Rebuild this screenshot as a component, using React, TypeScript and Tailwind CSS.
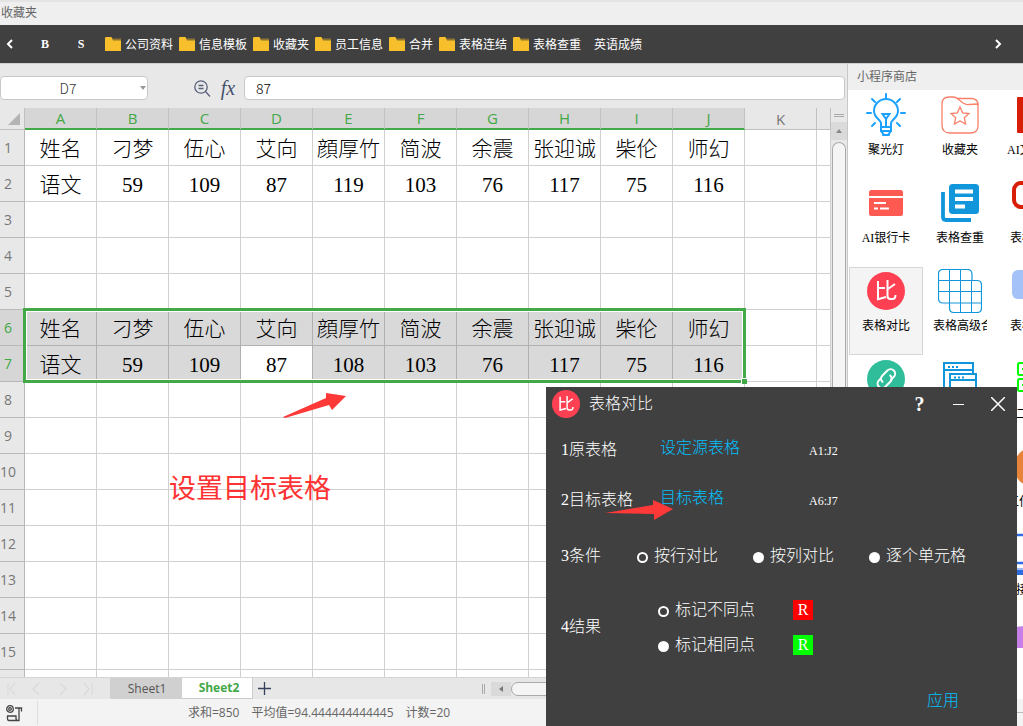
import React from 'react';

const columns = ['A', 'B', 'C', 'D', 'E', 'F', 'G', 'H', 'I', 'J', 'K', ''];
const names = ['姓名', '刁梦', '伍心', '艾向', '顔厚竹', '简波', '余震', '张迎诚', '柴伦', '师幻'];

const sheetData: Record<number, string[]> = {
  1: names,
  2: ['语文', '59', '109', '87', '119', '103', '76', '117', '75', '116'],
  6: names,
  7: ['语文', '59', '109', '87', '108', '103', '76', '117', '75', '116'],
};

const folders = ['公司资料', '信息模板', '收藏夹', '员工信息', '合并', '表格连结', '表格查重'];

const FolderIcon = () => (
  <svg width="16" height="14" viewBox="0 0 16 14" aria-hidden="true">
    <path d="M7 1.5h9V4H8z" fill="#8d7433" />
    <path d="M0 1 .7 0h5.800l1.600 3.500H16V14H0z" fill="#f6bf2b" />
  </svg>
);

const CompareIcon = ({ size }: { size: number }) => (
  <svg width={size} height={size} viewBox="0 0 38 38" fill="none" aria-hidden="true">
    <circle cx="19" cy="19" r="19" fill="#ff4053" />
    <path d="M11 9v18M11 16h7M10 27.500l9-2.500M28 12l-7 5M20.500 8v16q0 3 3 3h2q3 0 3-4" stroke="#fff" strokeWidth="2" />
  </svg>
);

const BulbIcon = () => (
  <svg width="40" height="44" viewBox="0 0 40 44" fill="none" stroke="#1ba1ff" strokeWidth="2" strokeLinecap="round" aria-hidden="true">
    <path d="M15 34v-4c0-3-7-5-7-12a12 12 0 0 1 24 0c0 7-7 9-7 12v4z" />
    <path d="M20 1v4M6 6l3 3M34 6l-3 3M1 20h4M35 20h4M6 33l3-3M34 33l-3-3M20 34V26M16.500 21h7l-3.500 5zM15 38h10M17 42h6" />
    <path d="M15 34h10v4l-3 4h-4l-3-4z" />
  </svg>
);

const StarFolderIcon = () => (
  <svg width="38" height="38" viewBox="0 0 38 38" fill="none" stroke="#fa8069" strokeWidth="1.300" aria-hidden="true">
    <path d="M1 8q0-7 7-7h4q3 0 5 2l5 4q3 2 6 1.500l9-.5v22q0 7-8 7H9q-8 0-8-8z" />
    <path d="M16 2.500h14q7 0 7 6.500" />
    <path d="m19 11 2.600 5.800 6.400.7-4.700 4.300 1.300 6.200-5.600-3.100-5.600 3.100 1.300-6.200-4.700-4.300 6.400-.7z" />
  </svg>
);

const CardIcon = () => (
  <svg width="34" height="26" viewBox="0 0 34 26" aria-hidden="true">
    <rect width="34" height="26" rx="2.500" fill="#ff5a52" />
    <path d="M0 7h34M5 13h12M5 18.500h4M11 18.500h9" stroke="#fff" strokeWidth="1.800" />
  </svg>
);

const DocsIcon = () => (
  <svg width="38" height="38" viewBox="0 0 38 38" fill="none" aria-hidden="true">
    <rect x="8" y="0" width="30" height="30" rx="3.500" fill="#1296db" />
    <path d="M14 7.500h18M14 15h18M14 22.500h10" stroke="#fff" strokeWidth="3.800" />
    <path d="M2 8v25q0 3 3 3h25" stroke="#1296db" strokeWidth="3.800" />
  </svg>
);

const AdvancedGridIcon = () => (
  <svg width="44" height="44" viewBox="0 0 44 44" fill="none" stroke="#1296db" aria-hidden="true">
    <path d="M5 .5h24q5 0 5 5v6h5q4.500 0 4.500 4.500v23q0 4.500-4.500 4.500H16q-4.500 0-4.500-4.500v-5H5q-4.500 0-4.500-4.500V5Q.5.5 5 .5z" strokeWidth="1.200" />
    <path d="M11.500 1v33M22.500 1v42M33.500 11v32M1 11.500h33M1 22.500h42M11 34h32" strokeWidth="1" />
  </svg>
);

const LinkIcon = () => (
  <svg width="38" height="38" viewBox="0 0 38 38" fill="none" aria-hidden="true">
    <circle cx="19" cy="19" r="19" fill="#30bd9a" />
    <g stroke="#fff" strokeWidth="2" strokeLinecap="round" transform="rotate(-45 19 19)">
      <path d="M16 15h-3a4.500 4.500 0 0 0 0 9h7a4.500 4.500 0 0 0 4.500-4.500" />
      <path d="M22 23h4a4.500 4.500 0 0 0 0-9h-7a4.500 4.500 0 0 0-4.500 4.500" />
    </g>
  </svg>
);

const WindowsIcon = () => (
  <svg width="34" height="34" viewBox="0 0 34 34" fill="none" stroke="#1296db" strokeWidth="2" aria-hidden="true">
    <path d="M1 33V1h29v11M1 8h29M7 33V12h26v21M7 18h26" />
    <path d="M5 5h2M9 5h2M13 5h2M11 15.500h2M15 15.500h2M19 15.500h2" />
  </svg>
);

const QrIcon = () => (
  <svg width="34" height="34" viewBox="0 0 34 34" fill="none" stroke="#00ff00" strokeWidth="2" aria-hidden="true">
    <rect x="1" y="1" width="12" height="12" rx="1.500" />
    <rect x="1" y="17" width="12" height="12" rx="1.500" />
    <rect x="19" y="1" width="12" height="12" rx="1.500" />
    <path d="M5 7h3M5 23h3M24 7h3M19 20h6v6M30 20v12h-8" />
  </svg>
);

interface Tile {
  label: string;
  icon: React.ReactNode;
  active?: boolean;
  labelWidth?: string;
}

const tiles: Tile[] = [
  { label: '聚光灯', icon: <BulbIcon /> },
  { label: '收藏夹', icon: <StarFolderIcon /> },
  {
    label: 'AI文字',
    labelWidth: 'w-[54px]',
    icon: <svg width="34" height="36" aria-hidden="true"><rect width="34" height="36" rx="1" fill="#d81e06" /></svg>,
  },
  { label: 'AI银行卡', icon: <CardIcon /> },
  { label: '表格查重', icon: <DocsIcon /> },
  {
    label: '表格',
    labelWidth: 'w-12',
    icon: (
      <svg width="44" height="44" viewBox="0 0 44 44" fill="none" aria-hidden="true">
        <rect x="2" y="2" width="40" height="24" rx="7" stroke="#d81e06" strokeWidth="4" />
      </svg>
    ),
  },
  { label: '表格对比', icon: <CompareIcon size={38} />, active: true },
  { label: '表格高级合', labelWidth: 'w-[54px]', icon: <AdvancedGridIcon /> },
  {
    label: '表格',
    labelWidth: 'w-12',
    icon: (
      <svg width="44" height="44" viewBox="0 0 44 44" aria-hidden="true">
        <rect y="1" width="44" height="29" rx="6" fill="#a4c2f8" />
      </svg>
    ),
  },
  { label: '', icon: <LinkIcon /> },
  { label: '', icon: <WindowsIcon /> },
  { label: '二维码', icon: <QrIcon /> },
  { label: '', icon: null },
  { label: '', icon: null },
  {
    label: '工作表',
    labelWidth: 'w-[54px]',
    icon: <svg width="44" height="44" aria-hidden="true"><circle cx="22" cy="22" r="20" fill="#e8833a" /></svg>,
  },
  { label: '', icon: null },
  { label: '', icon: null },
  {
    label: '接',
    labelWidth: 'w-9',
    icon: (
      <svg width="44" height="44" viewBox="0 0 44 44" fill="none" stroke="#2f6be0" aria-hidden="true">
        <path d="M2 2h40M2 30h40" strokeWidth="2.500" />
        <path d="M2 36h40" stroke="#9dbcf5" strokeWidth="2" />
        <path d="M2 39.500h40" strokeWidth="5" />
      </svg>
    ),
  },
  { label: '', icon: null },
  { label: '', icon: null },
  {
    label: '',
    icon: (
      <svg width="44" height="44" viewBox="0 0 44 44" aria-hidden="true">
        <path d="M2 27V7q2-2 20-2t20 2v20z" fill="#c77fe8" />
      </svg>
    ),
  },
];

const FavoritesBar = () => (
  <nav className="flex h-[38px] shrink-0 items-center bg-[#404040] text-xs text-white">
    <button aria-label="向左" className="flex w-[27px] pl-1.5">
      <svg width="7" height="10" viewBox="0 0 7 10" fill="none" stroke="#fff" strokeWidth="2"><path d="M6 1 2 5l4 4" /></svg>
    </button>
    <button className="w-9 font-['Liberation_Serif',serif] font-bold">B</button>
    <button className="w-9 font-['Liberation_Serif',serif] font-bold">S</button>
    <div className="flex gap-1.5 pl-1.5">
      {folders.map((name) => (
        <button key={name} className="flex items-center gap-1 whitespace-nowrap">
          <FolderIcon />
          {name}
        </button>
      ))}
      <button className="pl-[7px] whitespace-nowrap">英语成绩</button>
    </div>
    <button aria-label="向右" className="mr-[21px] ml-auto">
      <svg width="7" height="10" viewBox="0 0 7 10" fill="none" stroke="#fff" strokeWidth="2"><path d="m1 1 4 4-4 4" /></svg>
    </button>
  </nav>
);

const FormulaBar = () => (
  <div className="flex h-11 shrink-0 items-center bg-[#e8e8e8] pt-1 pr-0.5 text-sm font-light">
    <div className="relative h-6 w-[148px] shrink-0">
      <input aria-label="名称框" defaultValue="D7" className="h-6 w-full rounded border border-[#c8c8c8] bg-white pr-3 text-center text-[#333]" />
      <svg className="absolute top-2.5 right-0.5" width="6" height="4" aria-hidden="true"><path d="M0 0h6L3 4z" fill="#999" /></svg>
    </div>
    <button aria-label="查找" className="ml-[46px]">
      <svg width="17" height="17" viewBox="0 0 17 17" fill="none" stroke="#56617a" strokeWidth="1.300">
        <circle cx="7" cy="7" r="6.200" />
        <path d="m11.500 11.500 4.500 5M4.500 5.500h5M4.500 8.500h5" />
      </svg>
    </button>
    <button aria-label="插入函数" className="ml-2 w-[18px] font-['Liberation_Serif',serif] text-xl leading-6 text-[#46516b] italic">fx</button>
    <input aria-label="编辑栏" defaultValue="87" className="ml-[7px] h-6 min-w-0 flex-1 rounded border border-[#c8c8c8] bg-white px-[11px] text-black" />
  </div>
);

const SheetGrid = () => (
  <div className="relative min-w-0 flex-1 overflow-hidden bg-white">
    <table className="w-full table-fixed border-separate border-spacing-0">
      <colgroup>
        <col className="w-[25px]" />
        {columns.map((c, i) => (
          <col key={i} className={c ? 'w-[72px]' : ''} />
        ))}
      </colgroup>
      <thead>
        <tr className="h-[22px]">
          <th aria-label="全选" className="border-r border-b border-[#c0c0c0] bg-[#e8e8e8] p-0">
            <svg className="ml-2" width="12" height="12" aria-hidden="true"><path d="M12 0v12H0z" fill="#b4b4b4" /></svg>
          </th>
          {columns.map((c, i) => (
            <th
              key={i}
              scope="col"
              className={
                i < 10
                  ? "border-r border-b-2 border-r-[#c2c2c2] border-b-[#43a847] bg-[#d6d6d6] p-0 font-['Open_Sans',sans-serif] text-[15px] leading-5 font-normal text-[#43a847]"
                  : "border-r border-b border-[#c0c0c0] bg-[#e8e8e8] p-0 font-['Open_Sans',sans-serif] text-[15px] leading-5 font-normal text-[#777]"
              }
            >
              {c}
            </th>
          ))}
        </tr>
      </thead>
      <tbody>
        {Array.from({ length: 16 }, (_, i) => i + 1).map((row) => {
          const selected = row === 6 || row === 7;
          return (
            <tr key={row} className="h-9">
              <th
                scope="row"
                className={
                  selected
                    ? "border-r border-b border-[#b8b8b8] bg-[#d6d6d6] p-0 pr-2 font-['Open_Sans',sans-serif] text-sm font-normal text-[#43a847]"
                    : "border-r border-b border-[#b8b8b8] bg-[#e8e8e8] p-0 pr-2 font-['Open_Sans',sans-serif] text-sm font-normal text-[#777]"
                }
              >
                {row < 16 ? row : null}
              </th>
              {columns.map((_, i) => {
                let tone = 'border-[#d0d0d0]';
                if (selected && i < 10) tone = row === 7 && i === 3 ? 'border-[#b0b0b0] bg-white' : 'border-[#b0b0b0] bg-[#d9d9d9]';
                return (
                  <td
                    key={i}
                    className={`border-r border-b p-0 pt-0.5 text-center font-['Liberation_Serif','Noto_Sans_CJK_SC',serif] text-[21px] leading-8 font-light whitespace-nowrap text-black ${tone}`}
                  >
                    {sheetData[row]?.[i]}
                  </td>
                );
              })}
            </tr>
          );
        })}
      </tbody>
    </table>
    {/* selection frame A6:J7 with its fill handle */}
    <div className="absolute top-[200px] left-[23px] h-[75px] w-[723px] border-3 border-[#43a847]">
      <div className="h-full border border-white" />
      <div className="absolute -right-1 -bottom-1 size-1.5 border-t border-l border-white bg-[#43a847]" />
    </div>
  </div>
);

const VerticalScroll = () => (
  <div className="flex w-4 shrink-0 flex-col items-center bg-[#e8e8e8]">
    <div className="flex h-3.5 items-center">
      <div className="h-[3px] w-2.5 border-y border-[#aaa]" />
    </div>
    <button aria-label="向上滚动" className="flex h-[18px] w-full items-center justify-center bg-[#dadada]">
      <svg width="6" height="4"><path d="M0 4h6L3 0z" fill="#888" /></svg>
    </button>
    <div className="mt-0.5 w-3.5 flex-1 rounded-t-full border border-b-0 border-[#aaa] bg-[#f5f5f5]" />
  </div>
);

const SheetTabs = () => (
  <div className="flex h-[22px] shrink-0 border-t border-[#d4d4d4] bg-[#e7e7e7] font-['Open_Sans',sans-serif] text-xs">
    <svg className="ml-1.5 self-center" width="88" height="14" viewBox="0 0 88 14" fill="none" stroke="#dadada" strokeWidth="1.200" aria-hidden="true">
      <path d="M2 1v12M9 1 4 7l5 6M33 1l-6 6 6 6M54 1l6 6-6 6M78 1l5 6-5 6M86 1v12" />
    </svg>
    <button className="ml-4 w-[72px] bg-[#d0d0d0] pl-0.5 text-[#555]">Sheet1</button>
    <button className="w-[71px] border-r border-b border-[#ccc] bg-white pl-1 font-bold text-[#43a847]">Sheet2</button>
    <button aria-label="新建工作表" className="px-[5px]">
      <svg width="13" height="13" stroke="#37415c" strokeWidth="1.300"><path d="M6.500 0v13M0 6.500h13" /></svg>
    </button>
    <div className="ml-auto flex w-[365px] items-center">
      <div className="h-2.5 w-[3px] border-x border-[#aaa]" />
      <button aria-label="向左滚动" className="ml-1.5 flex h-3.5 w-5 items-center justify-center bg-[#dadada]">
        <svg width="4" height="6"><path d="M4 0v6L0 3z" fill="#777" /></svg>
      </button>
      <div className="h-3.5 flex-1 rounded-full border border-[#aaa] bg-[#f5f5f5]" />
    </div>
  </div>
);

const StorePanel = () => (
  <aside className="flex w-44 shrink-0 flex-col overflow-hidden border-l border-[#c8c8c8] bg-white">
    <h2 className="h-[26px] shrink-0 bg-[#efefef] pl-[9px] text-xs leading-6 text-[#666]">小程序商店</h2>
    <div className="grid grid-cols-[74px_74px_74px] pt-px pl-px text-xs">
      {tiles.map((tile, i) => (
        <button
          key={i}
          className={
            tile.active
              ? 'flex h-[88px] flex-col items-center bg-[#f4f4f4] outline outline-[#d6d6d6] -outline-offset-1'
              : 'flex h-[88px] flex-col items-center'
          }
        >
          <span className="flex h-12 items-center">{tile.icon}</span>
          <span className={`overflow-hidden text-left leading-5 whitespace-nowrap text-black ${tile.labelWidth ?? ''}`}>
            {tile.label.startsWith('AI') ? (
              <>
                <span className="font-['Liberation_Serif',serif]">AI</span>
                {tile.label.slice(2)}
              </>
            ) : (
              tile.label
            )}
          </span>
        </button>
      ))}
    </div>
  </aside>
);

const StatusBar = () => (
  <footer className="flex h-[27px] shrink-0 items-center bg-[#f3f3f3] font-['Open_Sans','Noto_Sans_CJK_SC',sans-serif] text-xs text-[#666]">
    <svg className="ml-1.5 shrink-0" width="17" height="18" viewBox="0 0 17 18" fill="none" stroke="#444" strokeWidth="1.300" aria-hidden="true">
      <circle cx="4" cy="5" r="3.300" />
      <circle cx="4" cy="5" r="1.300" />
      <path d="M9 4h6.500v3.500M13 4v12.500H3q-1.500 0-1.500-2V12h8.500v2.500q0 2 2 2" />
    </svg>
    <div className="ml-3.5 h-6 w-px bg-[#ddd]" />
    <div className="flex gap-3 pl-[150px] whitespace-nowrap">
      <span>求和=850</span>
      <span>平均值=94.444444444445</span>
      <span>计数=20</span>
    </div>
    <div className="ml-auto h-px w-2 bg-[#bbb]" />
  </footer>
);

interface RadioProps {
  name: string;
  label: string;
  width: string;
  checked?: boolean;
}

const Radio: React.FC<RadioProps> = ({ name, label, width, checked }) => (
  <label className={`flex items-center gap-1.5 whitespace-nowrap ${width}`}>
    <input
      type="radio"
      name={name}
      defaultChecked={checked}
      className="mt-[3px] size-[11px] appearance-none rounded-full bg-white checked:border-2 checked:border-white checked:bg-[#404040]"
    />
    {label}
  </label>
);

const CompareDialog = () => (
  <section
    role="dialog"
    aria-label="表格对比"
    className="absolute top-[387px] right-1.5 bottom-0 w-[471px] bg-[#404040] font-['Liberation_Serif','Noto_Sans_CJK_SC',serif] text-base leading-6 font-light text-white"
  >
    <header className="flex h-[38px] items-center pb-1 pl-1.5">
      <CompareIcon size={28} />
      <h1 className="ml-[9px]">表格对比</h1>
      <button aria-label="帮助" className="ml-auto w-[39px] text-xl font-bold">?</button>
      <button aria-label="最小化" className="flex w-[39px] justify-center">
        <svg width="11" height="11" stroke="#fff"><path d="M0 5.500h11" /></svg>
      </button>
      <button aria-label="关闭" className="flex w-[39px] justify-center">
        <svg width="14" height="14" stroke="#fff" strokeWidth="1.500"><path d="m0 0 14 14M14 0 0 14" /></svg>
      </button>
    </header>
    <div className="pl-[15px]">
      <div className="flex h-[50px] items-center">
        <span className="w-[99px]">1原表格</span>
        <div className="w-[149px]">
          <button className="pb-1 text-[#00c0ff]">设定源表格</button>
        </div>
        <span className="pt-0.5 text-xs">A1:J2</span>
      </div>
      <div className="flex h-[50px] items-center">
        <span className="w-[99px]">2目标表格</span>
        <div className="w-[149px]">
          <button className="pb-1 text-[#00c0ff]">目标表格</button>
        </div>
        <span className="pt-0.5 text-xs">A6:J7</span>
      </div>
      <div className="flex h-[62px] items-center" role="radiogroup" aria-label="条件">
        <span className="w-[76px]">3条件</span>
        <Radio name="condition" label="按行对比" width="w-[116px]" checked />
        <Radio name="condition" label="按列对比" width="w-[116px]" />
        <Radio name="condition" label="逐个单元格" width="w-[116px]" />
      </div>
      <div className="flex h-20 items-center" role="radiogroup" aria-label="结果">
        <span className="w-[97px]">4结果</span>
        <div>
          <div className="flex h-[35px] items-center">
            <Radio name="result" label="标记不同点" width="w-[135px]" checked />
            <button className="size-5 bg-[#ff0000] leading-5">R</button>
          </div>
          <div className="flex h-[35px] items-center">
            <Radio name="result" label="标记相同点" width="w-[135px]" />
            <button className="size-5 bg-[#00ff00] leading-5">R</button>
          </div>
        </div>
      </div>
    </div>
    <div className="flex justify-end pt-[22px] pr-[58px]">
      <button className="text-[#00c0ff]">应用</button>
    </div>
    <svg className="absolute top-[112px] left-[59px]" width="70" height="22" viewBox="0 0 70 22" aria-hidden="true">
      <path d="m0 14 48-8V1l20 9-19 11v-6z" fill="#ff3838" />
    </svg>
  </section>
);

export default function App() {
  return (
    <div className="relative flex h-screen flex-col overflow-hidden bg-[#e8e8e8] font-['Noto_Sans_CJK_SC',sans-serif]">
      <div className="h-[25px] shrink-0 border-t-2 border-[#e4e4e4] bg-[#efefef] pl-px text-xs leading-5 text-[#666]">收藏夹</div>
      <FavoritesBar />
      <div className="flex min-h-0 flex-1 border-t border-[#d0d0d0]">
        <main className="flex min-w-0 flex-1 flex-col">
          <FormulaBar />
          <div className="flex min-h-0 flex-1">
            <SheetGrid />
            <VerticalScroll />
          </div>
          <SheetTabs />
        </main>
        <StorePanel />
      </div>
      <StatusBar />
      <svg className="absolute top-[392px] left-[283px]" width="64" height="27" viewBox="0 0 64 27" aria-hidden="true">
        <path d="M0 25 43 6V1l20 3-14 14-3-5L2 26z" fill="#ff3838" />
      </svg>
      <p className="absolute top-[469px] left-[169px] text-[27px] leading-9 text-[#ff3333]">设置目标表格</p>
      <CompareDialog />
    </div>
  );
}
